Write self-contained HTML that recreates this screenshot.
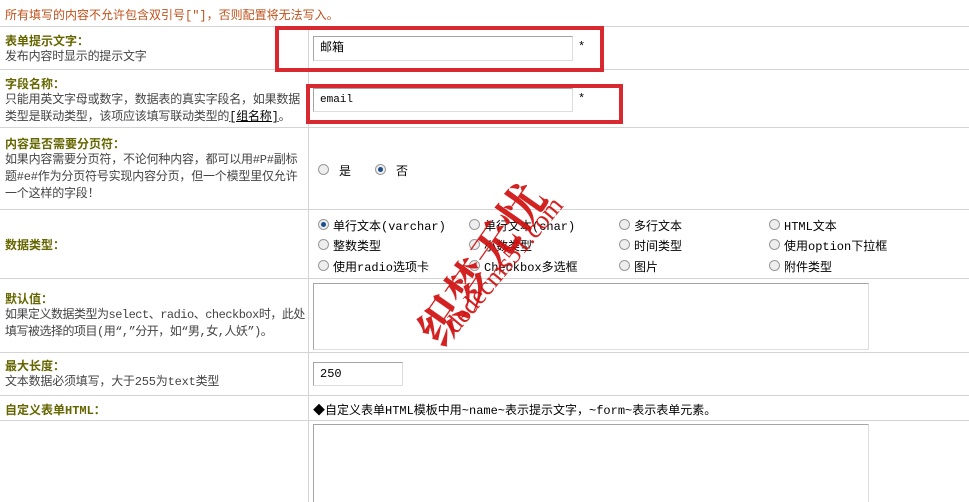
<!DOCTYPE html>
<html><head><meta charset="utf-8"><style>
html,body{margin:0;width:969px;height:502px;overflow:hidden}
body{background:#fff;font:12px "Liberation Mono","Noto Sans CJK SC",monospace;color:#333;position:relative}
.a{position:absolute}
.h{position:absolute;left:0;width:969px;height:1px;background:#d4d4d4}
.v{position:absolute;left:308px;width:1px;background:#d4d4d4}
.lb{position:absolute;left:5px;color:#666600;font-weight:bold;font-size:12px}
.ds{position:absolute;left:5px;line-height:17px;color:#444;white-space:nowrap;letter-spacing:-0.2px}
.in{position:absolute;border:1px solid #a5a5a5;border-right-color:#ddd;border-bottom-color:#ddd;background:#fff;box-sizing:border-box;padding-left:6px;font-size:12px;color:#000}
.rb{position:absolute;border:4px solid #d82830;box-sizing:border-box}
.r{position:absolute;width:11px;height:11px;border-radius:50%;border:1px solid #999;background:#eee;box-sizing:border-box}
.r.on::after{content:"";position:absolute;left:2px;top:2px;width:5px;height:5px;border-radius:50%;background:#1d4f8a}
.t{position:absolute;color:#000;font-size:12px;white-space:nowrap}
</style></head><body>
<div class="a" style="left:5px;top:6px;color:#c0501a">所有填写的内容不允许包含双引号["]，否则配置将无法写入。</div>
<div class="h" style="top:26px"></div>
<div class="h" style="top:69px"></div>
<div class="h" style="top:127px"></div>
<div class="h" style="top:209px"></div>
<div class="h" style="top:278px"></div>
<div class="h" style="top:352px"></div>
<div class="h" style="top:395px"></div>
<div class="h" style="top:420px"></div>
<div class="v" style="top:26px;height:476px"></div>

<div class="lb" style="top:32px">表单提示文字：</div>
<div class="ds" style="top:49px">发布内容时显示的提示文字</div>
<div class="lb" style="top:75px">字段名称：</div>
<div class="ds" style="top:92px">只能用英文字母或数字，数据表的真实字段名，如果数据<br>类型是联动类型，该项应该填写联动类型的<u style="color:#000">[组名称]</u>。</div>
<div class="lb" style="top:135px">内容是否需要分页符：</div>
<div class="ds" style="top:152px">如果内容需要分页符，不论何种内容，都可以用#P#副标<br>题#e#作为分页符号实现内容分页，但一个模型里仅允许<br>一个这样的字段！</div>
<div class="lb" style="top:236px">数据类型：</div>
<div class="lb" style="top:290px">默认值：</div>
<div class="ds" style="top:307px;letter-spacing:-0.5px">如果定义数据类型为select、radio、checkbox时，此处<br>填写被选择的项目(用“,”分开，如“男,女,人妖”)。</div>
<div class="lb" style="top:357px">最大长度：</div>
<div class="ds" style="top:374px">文本数据必须填写，大于255为text类型</div>
<div class="lb" style="top:401px">自定义表单HTML：</div>

<div class="in" style="left:313px;top:36px;width:260px;height:25px;line-height:23px">邮箱</div>
<div class="t" style="left:578px;top:40px">*</div>
<div class="in" style="left:313px;top:88px;width:260px;height:24px;line-height:22px;font-size:11px">email</div>
<div class="t" style="left:578px;top:92px">*</div>
<div class="rb" style="left:275px;top:26px;width:329px;height:46px"></div>
<div class="rb" style="left:306px;top:84px;width:317px;height:40px"></div>

<div class="r" style="left:318px;top:164px"></div><div class="t" style="left:339px;top:162px">是</div>
<div class="r on" style="left:375px;top:164px"></div><div class="t" style="left:396px;top:162px">否</div>

<div class="r on" style="left:318px;top:219px"></div><div class="t" style="left:333px;top:217px">单行文本(varchar)</div>
<div class="r" style="left:469px;top:219px"></div><div class="t" style="left:484px;top:217px">单行文本(char)</div>
<div class="r" style="left:619px;top:219px"></div><div class="t" style="left:634px;top:217px">多行文本</div>
<div class="r" style="left:769px;top:219px"></div><div class="t" style="left:784px;top:217px">HTML文本</div>
<div class="r" style="left:318px;top:239px"></div><div class="t" style="left:333px;top:237px">整数类型</div>
<div class="r" style="left:469px;top:239px"></div><div class="t" style="left:484px;top:237px">小数类型</div>
<div class="r" style="left:619px;top:239px"></div><div class="t" style="left:634px;top:237px">时间类型</div>
<div class="r" style="left:769px;top:239px"></div><div class="t" style="left:784px;top:237px">使用option下拉框</div>
<div class="r" style="left:318px;top:260px"></div><div class="t" style="left:333px;top:258px">使用radio选项卡</div>
<div class="r" style="left:469px;top:260px"></div><div class="t" style="left:484px;top:258px">Checkbox多选框</div>
<div class="r" style="left:619px;top:260px"></div><div class="t" style="left:634px;top:258px">图片</div>
<div class="r" style="left:769px;top:260px"></div><div class="t" style="left:784px;top:258px">附件类型</div>

<div class="in" style="left:313px;top:283px;width:556px;height:67px"></div>
<div class="in" style="left:313px;top:362px;width:90px;height:24px;line-height:22px">250</div>
<div class="t" style="left:313px;top:401px">◆自定义表单HTML模板中用~name~表示提示文字，~form~表示表单元素。</div>
<div class="in" style="left:313px;top:424px;width:556px;height:90px"></div>

<div class="a" style="left:388px;top:230px;transform:rotate(-55deg);color:#d01010;font-size:46px;font-weight:bold;font-family:'Noto Serif CJK SC',serif;white-space:nowrap;opacity:.92">织梦无忧</div>
<div class="a" style="left:420px;top:250px;transform:rotate(-50deg);color:#d01010;font-size:26px;font-family:'Liberation Serif',serif;white-space:nowrap;opacity:.92">dedecms51.com</div>
</body></html>
